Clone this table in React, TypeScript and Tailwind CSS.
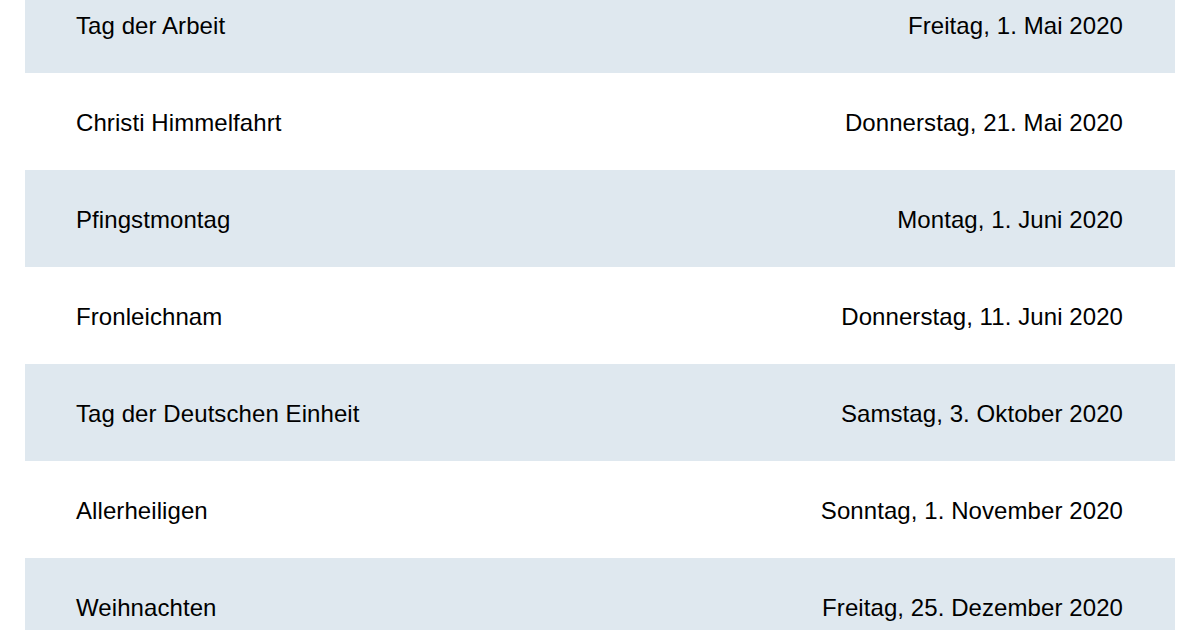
const HOLIDAYS = [
  { name: "Tag der Arbeit", date: "Freitag, 1. Mai 2020" },
  { name: "Christi Himmelfahrt", date: "Donnerstag, 21. Mai 2020" },
  { name: "Pfingstmontag", date: "Montag, 1. Juni 2020" },
  { name: "Fronleichnam", date: "Donnerstag, 11. Juni 2020" },
  { name: "Tag der Deutschen Einheit", date: "Samstag, 3. Oktober 2020" },
  { name: "Allerheiligen", date: "Sonntag, 1. November 2020" },
  { name: "Weihnachten", date: "Freitag, 25. Dezember 2020" },
];

export default function App() {
  return (
    <div className="h-[630px] overflow-hidden bg-white px-[25px] font-['Liberation_Sans',Arial,sans-serif] text-black">
      <div className="-mt-[24px]">
        {HOLIDAYS.map((h, i) => (
          <div
            key={h.name}
            className={`flex h-[97px] items-center justify-between pl-[51px] pr-[52px] pt-[2px] text-[24px] tracking-[0.08px] ${i % 2 === 0 ? "bg-[#dfe8ef]" : "bg-white"}`}
          >
            <span>{h.name}</span>
            <span>{h.date}</span>
          </div>
        ))}
      </div>
    </div>
  );
}
